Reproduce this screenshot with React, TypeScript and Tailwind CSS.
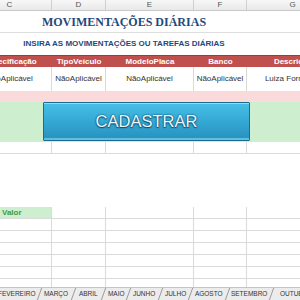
import React from "react"

const colW = ["w-[84px]", "w-[54px]", "w-[88px]", "w-[53px]", "w-[92px]"]
const letters = ["C", "D", "E", "F", "G"]
const heads = ["Especificação", "TipoVeículo", "ModeloPlaca", "Banco", "Descrição"]
const vals = ["NãoAplicável", "NãoAplicável", "NãoAplicável", "NãoAplicável", "Luiza Formagio"]
const tabs = [
  { name: "FEVEREIRO", w: "w-[44px]" },
  { name: "MARÇO", w: "w-[34px]" },
  { name: "ABRIL", w: "w-[30px]" },
  { name: "MAIO", w: "w-[25px]" },
  { name: "JUNHO", w: "w-[32px]" },
  { name: "JULHO", w: "w-[30px]" },
  { name: "AGOSTO", w: "w-[37px]" },
  { name: "SETEMBRO", w: "w-[44px]" },
  { name: "OUTUBRO", w: "w-[49px]" },
]

function GridRow({ h, first }: { h: string; first?: React.ReactNode }) {
  return (
    <div className={`flex -ml-[32px] shrink-0 border-b border-[#dadada] ${h}`}>
      {colW.map((w, i) => (
        <div key={i} className={`${w} shrink-0 border-r border-[#dadada]`}>
          {i === 0 ? first : null}
        </div>
      ))}
    </div>
  )
}

export default function App() {
  return (
    <div className="w-[300px] h-[300px] overflow-hidden bg-white flex flex-col font-['Liberation_Sans',Arial,sans-serif]">
      {/* column letters */}
      <div className="flex -ml-[32px] h-[11px] shrink-0 bg-gradient-to-b from-[#f7f7f7] to-[#e9e9e9] border-b border-[#c9c9c9]">
        {colW.map((w, i) => (
          <div key={i} className={`${w} shrink-0 border-r border-[#cfcfcf] flex items-center justify-center text-[8px] text-[#555]`}>{letters[i]}</div>
        ))}
      </div>

      {/* title */}
      <div className="h-[22px] shrink-0 border-b border-[#dedede] flex items-center">
        <div className="w-[248px] text-center font-['Liberation_Serif',serif] font-bold text-[12px] text-[#1f497d] leading-none">MOVIMENTAÇÕES DIÁRIAS</div>
      </div>

      {/* subtitle */}
      <div className="h-[22px] shrink-0 flex items-center">
        <div className="w-[248px] text-center font-bold text-[8px] text-[#1f497d] leading-none">INSIRA AS MOVIMENTAÇÕES OU TAREFAS DIÁRIAS</div>
      </div>

      {/* red header */}
      <div className="flex -ml-[32px] h-[12px] shrink-0 bg-[#c0504d] border-t border-[#9c3b38]">
        {colW.map((w, i) => (
          <div key={i} className={`${w} shrink-0 flex items-center justify-center text-[8px] font-bold text-white whitespace-nowrap`}>{heads[i]}</div>
        ))}
      </div>

      {/* data row */}
      <div className="flex -ml-[32px] h-[24px] shrink-0 bg-white">
        {colW.map((w, i) => (
          <div key={i} className={`${w} shrink-0 border-r border-[#dadada] flex items-center justify-center text-[8px] text-[#333] whitespace-nowrap`}>{vals[i]}</div>
        ))}
      </div>

      {/* pink */}
      <div className="h-[11px] shrink-0 bg-[#fadadb]" />

      {/* green with button */}
      <div className="h-[40px] shrink-0 bg-[#cdefcf] pl-[43px]">
        <button className="w-[207px] h-[39px] rounded-[1px] border border-[#1b6c90] bg-gradient-to-b from-[#46bfe6] via-[#34a8d4] to-[#2890bd] shadow-[inset_0_1px_0_#8fdcf3,inset_0_-2px_0_#5fbfe0] flex items-center justify-center text-[16.5px] text-[#eef8fc] [text-shadow:0_0_2px_#0c4f70,0_0_1px_#0c4f70,0_1px_1px_#0c4f70]">
          CADASTRAR
        </button>
      </div>

      <GridRow h="h-[12px]" />

      <div className="h-[53px] shrink-0 bg-white" />

      <div className="flex-1 overflow-hidden flex flex-col">
        <GridRow
          h="h-[12px]"
          first={
            <div className="h-full ml-[32px] bg-[#cdefcf] flex items-center pl-[2px] text-[8px] font-bold text-[#3d9a44]">Valor</div>
          }
        />
        {[0, 1, 2, 3, 4, 5].map((k) => (
          <GridRow key={k} h="h-[12px]" />
        ))}
      </div>

      {/* sheet tabs */}
      <div className="h-[13px] shrink-0 bg-[#ececec] border-t border-[#c4c4c4] flex -ml-[5px] overflow-hidden">
        {tabs.map((t, i) => (
          <div key={t.name} className={`${t.w} shrink-0 -skew-x-20 ${i > 0 ? "border-l border-[#9a9a9a]" : ""} flex items-center justify-center`}>
            <span className="skew-x-20 text-[6.5px] text-[#333] whitespace-nowrap leading-none">{t.name}</span>
          </div>
        ))}
      </div>
    </div>
  )
}
